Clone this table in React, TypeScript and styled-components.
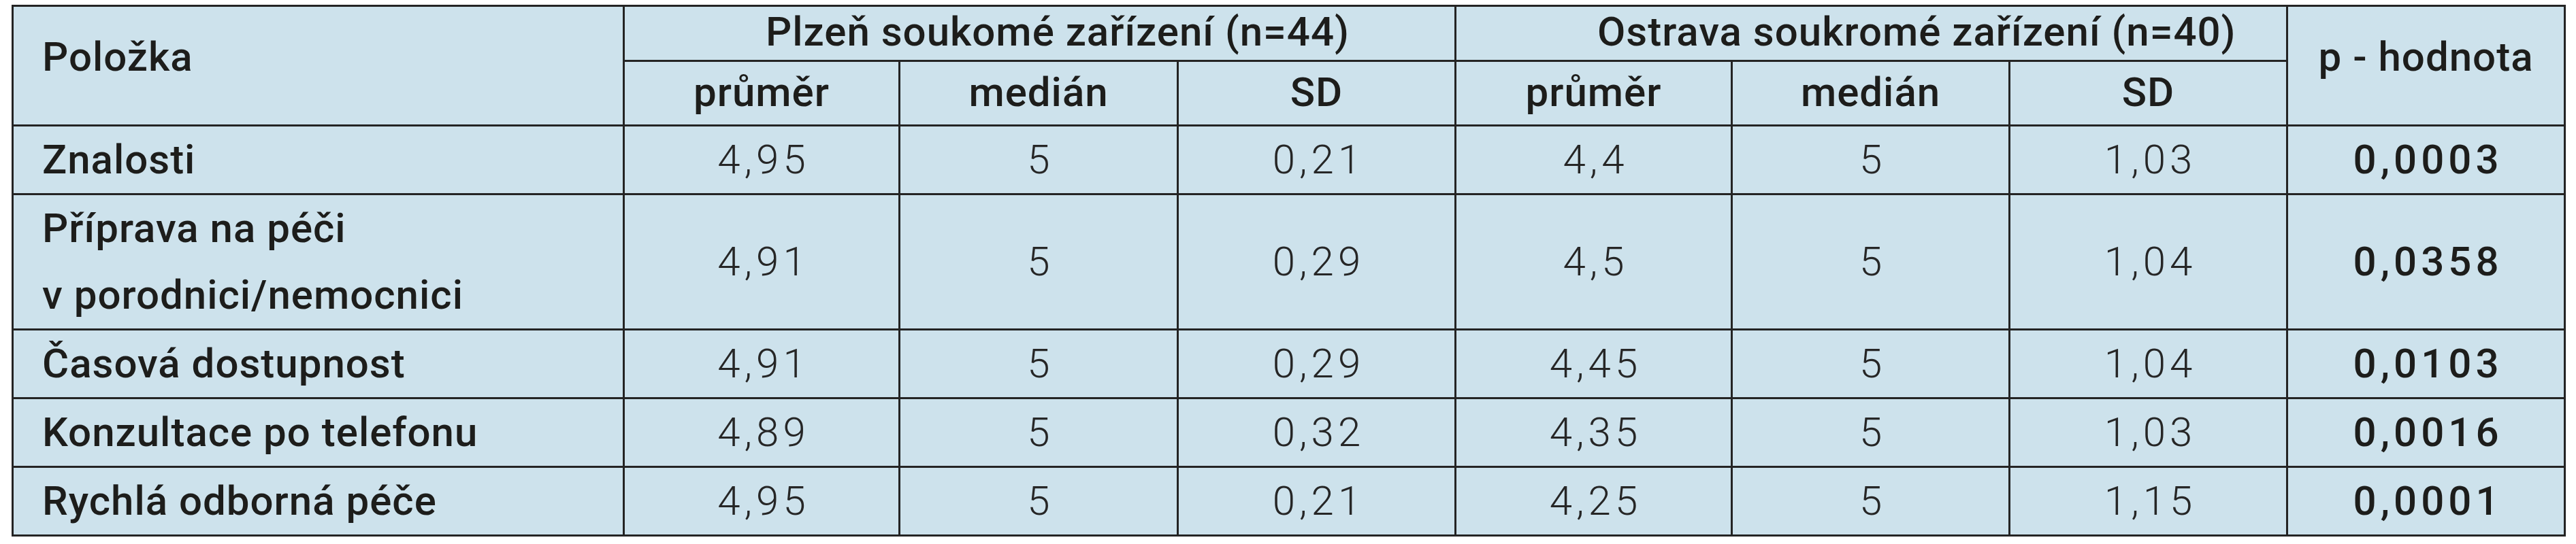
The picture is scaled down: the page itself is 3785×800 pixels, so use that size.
import React from "react";
import styled, { createGlobalStyle } from "styled-components";

type Row = {
  label: string[];
  plzen: [string, string, string];
  ostrava: [string, string, string];
  p: string;
};

const rows: Row[] = [
  { label: ["Znalosti"], plzen: ["4,95", "5", "0,21"], ostrava: ["4,4", "5", "1,03"], p: "0,0003" },
  {
    label: ["Příprava na péči", "v porodnici/nemocnici"],
    plzen: ["4,91", "5", "0,29"],
    ostrava: ["4,5", "5", "1,04"],
    p: "0,0358",
  },
  { label: ["Časová dostupnost"], plzen: ["4,91", "5", "0,29"], ostrava: ["4,45", "5", "1,04"], p: "0,0103" },
  { label: ["Konzultace po telefonu"], plzen: ["4,89", "5", "0,32"], ostrava: ["4,35", "5", "1,03"], p: "0,0016" },
  { label: ["Rychlá odborná péče"], plzen: ["4,95", "5", "0,21"], ostrava: ["4,25", "5", "1,15"], p: "0,0001" },
];

const colWidths = [898, 405, 409, 408, 406, 408, 408, 408];

const App = () => {
  return (
    <>
      <GlobalStyle />
      <Table>
        <colgroup>
          {colWidths.map((w, i) => (
            <col key={i} style={{ width: w }} />
          ))}
        </colgroup>
        <thead>
          <tr>
            <SideHead rowSpan={2} $align="left">
              Položka
            </SideHead>
            <GroupHead colSpan={3}>Plzeň soukomé zařízení (n=44)</GroupHead>
            <GroupHead colSpan={3}>Ostrava soukromé zařízení (n=40)</GroupHead>
            <SideHead rowSpan={2} $align="center">
              p - hodnota
            </SideHead>
          </tr>
          <tr>
            <SubHead>průměr</SubHead>
            <SubHead>medián</SubHead>
            <SubHead>SD</SubHead>
            <SubHead>průměr</SubHead>
            <SubHead>medián</SubHead>
            <SubHead>SD</SubHead>
          </tr>
        </thead>
        <tbody>
          {rows.map((r) => (
            <tr key={r.label[0]}>
              <LabelCell>
                {r.label.map((l, i) => (
                  <React.Fragment key={l}>
                    {i > 0 && <br />}
                    {l}
                  </React.Fragment>
                ))}
              </LabelCell>
              {[...r.plzen, ...r.ostrava].map((v, i) => (
                <NumCell key={i}>{v}</NumCell>
              ))}
              <NumCell $bold>{r.p}</NumCell>
            </tr>
          ))}
        </tbody>
      </Table>
    </>
  );
};

export default App;

const GlobalStyle = createGlobalStyle`
  html, body {
    margin: 0;
    padding: 0;
    background: #ffffff;
  }
  body {
    font-family: Roboto, "Liberation Sans", Arial, sans-serif;
    color: #1d1d1b;
  }
`;

const Table = styled.table`
  margin: 7px 0 0 17px;
  width: 3750px;
  table-layout: fixed;
  border-collapse: collapse;
  background-color: #cde2ec;
  border: 3px solid #242424;

  td,
  th {
    border: 3px solid #242424;
    padding: 0;
  }
`;

const SideHead = styled.th<{ $align: "left" | "center" }>`
  font-size: 60px;
  font-weight: 500;
  letter-spacing: 1px;
  text-align: ${(p) => p.$align};
  vertical-align: middle;
  padding: 0 0 26px ${(p) => (p.$align === "left" ? "42px" : "0")} !important;
`;

const GroupHead = styled.th`
  height: 72px;
  font-size: 60px;
  font-weight: 500;
  letter-spacing: 1px;
  text-align: left;
  vertical-align: middle;
  padding: 0 0 6px 207px !important;
  white-space: nowrap;
`;

const SubHead = styled.th`
  height: 88px;
  font-size: 60px;
  font-weight: 500;
  letter-spacing: 1px;
  text-align: center;
  vertical-align: middle;
  padding-bottom: 4px !important;
`;

const LabelCell = styled.td`
  font-size: 60px;
  font-weight: 500;
  line-height: 98px;
  letter-spacing: 1px;
  text-align: left;
  padding-left: 42px !important;
  white-space: nowrap;
`;

const NumCell = styled.td<{ $bold?: boolean }>`
  font-size: 60px;
  font-weight: ${(p) => (p.$bold ? 500 : 300)};
  line-height: 98px;
  letter-spacing: 6px;
  text-indent: 6px;
  text-align: center;
  color: ${(p) => (p.$bold ? "#1d1d1b" : "#262626")};
`;
